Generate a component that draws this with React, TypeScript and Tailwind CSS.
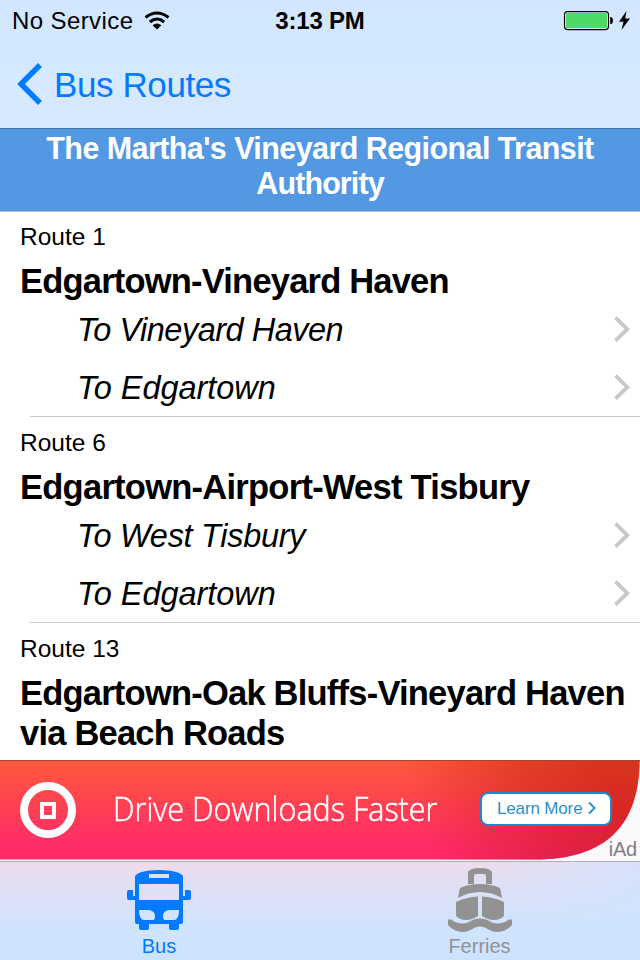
import React from "react";

function Chevron() {
  return (
    <svg width="18" height="28" viewBox="0 0 18 28" fill="none" className="shrink-0">
      <path d="M2.5 2.7 L14.3 14.2 L2.5 25.7" stroke="#c7c7cc" strokeWidth="3.8" />
    </svg>
  );
}

function Direction({ label, spacing }: { label: string; spacing: string }) {
  return (
    <div className="flex h-[58px] items-center justify-between pr-[9px] pl-[77px]">
      <span className={`text-[32.5px] leading-[60px] whitespace-nowrap italic ${spacing}`}>
        <span className="block pt-px">{label}</span>
      </span>
      <Chevron />
    </div>
  );
}

type RouteProps = {
  number: string;
  children: React.ReactNode;
  directions?: { label: string; spacing: string }[];
};

function Route({ number, children, directions = [] }: RouteProps) {
  return (
    <section className="pt-[11px]">
      <p className="pl-[20px] text-[24.5px] leading-[30px]">{number}</p>
      <h2 className="mt-[9px] pl-[20px] text-[34.5px] leading-[40px] font-bold whitespace-nowrap">{children}</h2>
      {directions.length > 0 && (
        <div className="-mt-px">
          {directions.map((d) => (
            <Direction key={d.label} {...d} />
          ))}
          <div className="ml-[30px] h-px bg-[#c8c7cc]" />
        </div>
      )}
    </section>
  );
}

function StatusBar() {
  return (
    <div className="grid h-10 grid-cols-3 items-center text-[24px] leading-[42px]">
      <div className="flex items-center pl-3">
        <span className="tracking-[0.4px] whitespace-nowrap">No Service</span>
        <svg width="26" height="20" viewBox="0 0 26 20" className="-mt-px ml-[11px]" fill="none" stroke="#000">
          <path d="M1.5 6.5 Q13 -2.5 24.5 6.5" strokeWidth="3" />
          <path d="M5.8 11 Q13 5 20.2 11" strokeWidth="3" />
          <path d="M8.6 14.2 Q13 10.6 17.4 14.2 L13 18.6 Z" fill="#000" stroke="none" />
        </svg>
      </div>
      <div className="text-center font-bold tracking-[-0.2px] whitespace-nowrap">3:13 PM</div>
      <div className="flex items-center justify-end pr-[9px]">
        <svg width="68" height="20" viewBox="0 0 68 20">
          <rect x="1.5" y="0.6" width="44" height="18" rx="3" fill="none" stroke="#000" strokeWidth="1.1" />
          <rect x="3" y="2.1" width="41" height="15" rx="1.5" fill="#4cd964" />
          <path d="M47.2 6 h1 q1.8 0.6 1.8 3.5 t-1.8 3.5 h-1 z" fill="#000" />
          <path d="M63.5 0 L56 10.8 H60.5 L58.5 19 L67 7.6 H62.2 Z" fill="#000" />
        </svg>
      </div>
    </div>
  );
}

function BusIcon() {
  return (
    <svg width="64" height="62" viewBox="0 0 64 62" fill="#007aff">
      <path
        fillRule="evenodd"
        d="M8 6 Q12 0.5 32 0 Q52 0.5 56 6 V26 H58 V20 H62 Q64 20 64 22 V28 Q64 30 62 30 H56 V52 Q56 54 54 54 H52 V58 Q52 60 50 60 H44 Q42 60 42 58 V54 H22 V58 Q22 60 20 60 H14 Q12 60 12 58 V54 H10 Q8 54 8 52 V30 H2 Q0 30 0 28 V22 Q0 20 2 20 H6 V26 H8 Z M22 4 V8 H42 V4 Z M12 15 V29 Q12 30 13 30 H51 Q52 30 52 29 V15 Q52 14 51 14 H13 Q12 14 12 15 Z M12 40 Q12 48 16 50 H26 Q28 50 28 46 Q28 41 22 40 Z M52 40 H42 Q36 41 36 46 Q36 50 38 50 H48 Q52 48 52 40 Z"
      />
    </svg>
  );
}

function FerryIcon() {
  return (
    <svg width="64" height="66" viewBox="0 0 64 66" fill="#929292">
      <path d="M20 16 V4 Q22 0 32 0 Q42 0 44 4 V16 H38 V8 Q38 6 36 6 H28 Q26 6 26 8 V16 Z" />
      <path d="M12 20 Q20 16 32 16 Q44 16 52 20 L54 30 Q44 24 32 24 Q20 24 10 30 Z" />
      <path d="M8 34 Q18 29 30 28.5 V48 Q24 52 18 52 Q12 52 8 48 Z M34 28.5 Q46 29 56 34 V48 Q52 52 46 52 Q40 52 34 48 Z" />
      <path d="M0 51.5 H3 Q8 55.5 15 55.5 C21 55.5 24 50.5 32 50.5 C40 50.5 43 55.5 49 55.5 Q56 55.5 61 51.5 H64 V57 Q58 64 49 64 C42 64 38 58.5 32 58.5 C26 58.5 22 64 15 64 Q6 64 0 57 Z" />
    </svg>
  );
}

function AdBanner() {
  return (
    <div className="relative h-[101px] shrink-0 border-t border-[#a8433a] bg-[#fbf9fb]">
      <svg className="absolute inset-0" width="640" height="100" viewBox="0 0 640 100">
        <defs>
          <linearGradient id="warm" x1="0" y1="0" x2="0" y2="1">
            <stop offset="0" stopColor="#ff593d" />
            <stop offset="0.85" stopColor="#ff2c66" />
            <stop offset="1" stopColor="#ff2a68" />
          </linearGradient>
          <linearGradient id="deep" x1="0" y1="0" x2="0" y2="1">
            <stop offset="0" stopColor="#d6351d" />
            <stop offset="0.5" stopColor="#d92725" />
            <stop offset="1" stopColor="#da1c42" />
          </linearGradient>
          <linearGradient id="fade" gradientUnits="userSpaceOnUse" x1="410" y1="30" x2="590" y2="-30">
            <stop offset="0" stopColor="#fff" stopOpacity="0" />
            <stop offset="0.6" stopColor="#fff" stopOpacity="0.7" />
            <stop offset="1" stopColor="#fff" />
          </linearGradient>
          <mask id="right">
            <rect width="640" height="100" fill="url(#fade)" />
          </mask>
        </defs>
        <path d="M0 0 H639.5 C639 66 604 98.5 535 98.5 H0 Z" fill="url(#warm)" />
        <path d="M0 0 H639.5 C639 66 604 98.5 535 98.5 H0 Z" fill="url(#deep)" mask="url(#right)" />
      </svg>
      <div className="relative flex h-[98px] items-center">
        <svg width="56" height="56" viewBox="0 0 56 56" className="ml-5 shrink-0" fill="none" stroke="#fff">
          <circle cx="28" cy="28" r="24" strokeWidth="8" />
          <rect x="22" y="22" width="12" height="13" strokeWidth="4" />
        </svg>
        <div className="-mt-[2px] ml-[37px] w-[367px]">
          <span className="inline-block origin-left scale-x-[0.925] font-['Open_Sans',sans-serif] text-[33px] font-light whitespace-nowrap text-white [-webkit-text-stroke:0.5px_#fff]">
            Drive Downloads Faster
          </span>
        </div>
        <div className="-mt-[2px] flex h-[34px] w-[132px] shrink-0 items-center rounded-[8px] border-2 border-[#1e88c8] bg-white pl-[15px] text-[17px] whitespace-nowrap text-[#2a8fca]">
          <span className="-mt-px leading-[30px] tracking-[-0.15px]">Learn More</span>
          <svg width="9" height="14" viewBox="0 0 9 14" className="-mt-[2px] ml-[6px]" fill="none" stroke="#2a8fca" strokeWidth="2">
            <path d="M1 1.5 L6.5 7 L1 12.5" />
          </svg>
        </div>
      </div>
      <span className="absolute right-[3px] bottom-0 text-[20px] leading-[24px] tracking-[-0.2px] text-[#808080]">iAd</span>
    </div>
  );
}

export default function App() {
  return (
    <div className="flex h-[960px] w-[640px] flex-col overflow-hidden bg-white font-['Liberation_Sans',Arial,sans-serif] text-black">
      <header className="h-[128px] shrink-0 bg-linear-to-b from-[#d2e6ff] via-[#d4e9ff] to-[#d8e8ff]">
        <StatusBar />
        <div className="flex h-[88px] items-center pl-[16px] text-[#007aff]">
          <svg width="27" height="44" viewBox="0 0 27 44" fill="none" stroke="#007aff" strokeWidth="5.4">
            <path d="M24 3 L5 22 L24 41" />
          </svg>
          <span className="ml-[11px] pt-px text-[35px] leading-[44px] tracking-[-0.4px] whitespace-nowrap">Bus Routes</span>
        </div>
      </header>
      <h1 className="h-[84px] shrink-0 border-t border-b border-t-[#3f72ad] border-b-[#b9bec8] bg-[#5398e2] pt-[2px] text-center text-[30.5px] leading-[35px] font-bold text-white">
        <span className="block tracking-[-0.58px]">The Martha's Vineyard Regional Transit</span>
        <span className="block tracking-[-0.9px]">Authority</span>
      </h1>
      <main className="-mt-px min-h-0 flex-1 overflow-hidden">
        <Route
          number="Route 1"
          directions={[
            { label: "To Vineyard Haven", spacing: "tracking-[-0.5px]" },
            { label: "To Edgartown", spacing: "tracking-[-0.05px]" },
          ]}
        >
          <span className="tracking-[-0.8px]">Edgartown-Vineyard Haven</span>
        </Route>
        <Route
          number="Route 6"
          directions={[
            { label: "To West Tisbury", spacing: "tracking-[-0.3px]" },
            { label: "To Edgartown", spacing: "tracking-[-0.05px]" },
          ]}
        >
          <span className="tracking-[-0.74px]">Edgartown-Airport-West Tisbury</span>
        </Route>
        <Route number="Route 13">
          <span className="block tracking-[-0.78px]">Edgartown-Oak Bluffs-Vineyard Haven</span>
          <span className="block tracking-[-0.78px]">via Beach Roads</span>
        </Route>
      </main>
      <AdBanner />
      <nav className="grid h-[99px] shrink-0 grid-cols-2 border-t border-[#aeb0b8] bg-[linear-gradient(to_right,rgba(207,228,255,0)_75%,rgba(207,228,255,0.75)_100%),linear-gradient(to_bottom,#eedbea_0%,#e2dff2_20%,#d6e2fa_50%,#cfe4ff_70%,#cce3ff_100%)] text-[20px] leading-[24px]">
        <div className="flex flex-col items-center pt-[8px] pr-[2px] text-[#007aff]">
          <BusIcon />
          <span className="mt-[2px]">Bus</span>
        </div>
        <div className="flex flex-col items-center pt-[6px] pr-[1px] text-[#929292]">
          <FerryIcon />
          <span>Ferries</span>
        </div>
      </nav>
    </div>
  );
}
